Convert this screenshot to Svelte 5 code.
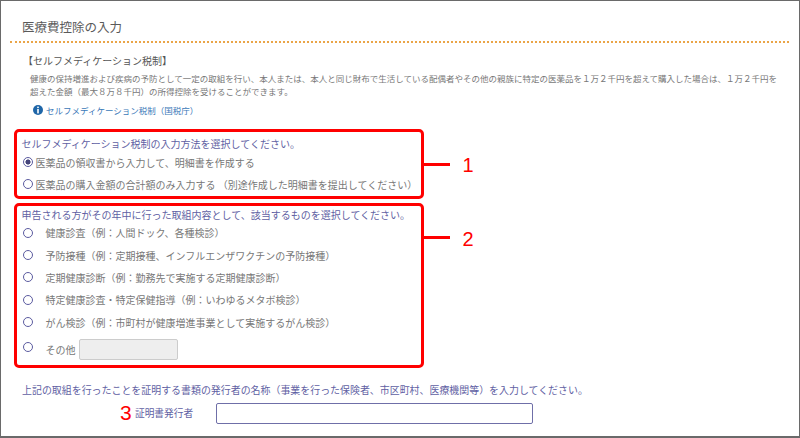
<script lang="ts">
  const kinds = [
    '健康診査（例：人間ドック、各種検診）',
    '予防接種（例：定期接種、インフルエンザワクチンの予防接種）',
    '定期健康診断（例：勤務先で実施する定期健康診断）',
    '特定健康診査・特定保健指導（例：いわゆるメタボ検診）',
    'がん検診（例：市町村が健康増進事業として実施するがん検診）'
  ];
  let method = $state('receipt');
  let kind = $state('');
</script>

<div class="frame">
  <h1>医療費控除の入力</h1>

  <section class="intro">
    <h2>【セルフメディケーション税制】</h2>
    <p>健康の保持増進および疾病の予防として一定の取組を行い、本人または、本人と同じ財布で生活している配偶者やその他の親族に特定の医薬品を１万２千円を超えて購入した場合は、１万２千円を超えた金額（最大８万８千円）の所得控除を受けることができます。</p>
    <a href="#top" class="link">
      <svg viewBox="0 0 10 10" width="10" height="10" aria-hidden="true">
        <circle cx="5" cy="5" r="5" fill="#1f66a8" />
        <rect x="4.2" y="1.6" width="1.6" height="1.5" fill="#fff" />
        <rect x="4.2" y="4" width="1.6" height="4.4" fill="#fff" />
      </svg>
      セルフメディケーション税制（国税庁）
    </a>
  </section>

  <section class="box method">
    <div class="prompt">セルフメディケーション税制の入力方法を選択してください。</div>
    <label class="opt tight">
      <input type="radio" bind:group={method} value="receipt" />
      <span>医薬品の領収書から入力して、明細書を作成する</span>
    </label>
    <label class="opt tight">
      <input type="radio" bind:group={method} value="total" />
      <span>医薬品の購入金額の合計額のみ入力する （別途作成した明細書を提出してください）</span>
    </label>
    <span class="tick"></span>
    <span class="num">1</span>
  </section>

  <section class="box kinds">
    <div class="prompt">申告される方がその年中に行った取組内容として、該当するものを選択してください。</div>
    {#each kinds as k (k)}
      <label class="opt">
        <input type="radio" bind:group={kind} value={k} />
        <span>{k}</span>
      </label>
    {/each}
    <label class="opt other">
      <input type="radio" bind:group={kind} value="other" />
      <span>その他</span>
      <input class="other-text" type="text" disabled />
    </label>
    <span class="tick"></span>
    <span class="num">2</span>
  </section>

  <section class="issuer">
    <div class="prompt long">上記の取組を行ったことを証明する書類の発行者の名称（事業を行った保険者、市区町村、医療機関等）を入力してください。</div>
    <div class="issuer-row">
      <span class="num-3">3</span>
      <label for="issuer">証明書発行者</label>
      <input id="issuer" type="text" />
    </div>
  </section>
</div>

<style>
  :global(body) { margin: 0; background: #fff; }
  .frame {
    box-sizing: border-box; width: 800px; height: 438px; overflow: hidden;
    border: 1px solid #6a6a6a; border-width: 1px 1px 2px 1.5px;
    font-family: "Noto Sans CJK JP", "Liberation Sans", sans-serif;
    color: #666; background: #fff;
  }
  h1 {
    margin: 0 10px 0 9px; padding: 19px 0 7px 12px;
    font-size: 12.5px; line-height: 14px; font-weight: 400; color: #5a5a5a;
    border-bottom: 2px dotted #eaa548;
  }
  .intro { padding: 11px 0 0 22px; height: 84px; box-sizing: border-box; }
  h2 { margin: 0; font-size: 10px; line-height: 14px; font-weight: 400; color: #555; }
  .intro p {
    margin: 4px 0 0 7px; width: 752px;
    font-size: 8.5px; line-height: 12.5px; color: #777;
  }
  .link {
    display: flex; align-items: center; gap: 3px; margin: 7px 0 0 10px;
    font-size: 8.5px; line-height: 12px; color: #3a78b8; text-decoration: none;
  }
  .box {
    position: relative; box-sizing: border-box; width: 410px; margin-left: 12.5px;
    border: 3px solid #f00; border-radius: 5px; padding: 4px 5px 0;
  }
  .method { height: 70px; margin-top: 2px; }
  .kinds { height: 165px; margin-top: 3.5px; padding-top: 1px; }
  .prompt { font-size: 10px; line-height: 15px; color: #5f5fa3; }
  .prompt.long { font-size: 9.95px; }
  .opt {
    display: flex; align-items: center; gap: 11px; height: 22.4px; padding-left: 1px;
    font-size: 10px; color: #777;
  }
  .opt.tight { gap: 1px; height: 22px; }
  input[type='radio'] {
    appearance: none; box-sizing: border-box; flex: none; margin: 0 2px 0 0;
    width: 10px; height: 10px; border: 1px solid #5b5ba0; border-radius: 50%; background: #fff;
  }
  input[type='radio']:checked { background: radial-gradient(circle, #44447a 0 2.3px, #fff 2.8px); }
  .other { height: 26px; gap: 0; margin-top: 3px; }
  .other input[type='radio'] { margin-bottom: 5px; }
  .other span { margin-left: 11px; }
  .other-text {
    box-sizing: border-box; width: 99px; height: 21px; margin-left: 3px;
    background: #eee; border: 1px solid #ccc; border-radius: 2px;
  }
  .tick { position: absolute; left: 406px; top: 30.5px; width: 27px; height: 3px; background: #f00; }
  .num {
    position: absolute; left: 446px; top: 21px; color: #f00;
    font: 400 20px/24px "Liberation Sans", sans-serif;
  }
  .issuer { padding: 14px 0 0 21px; }
  .issuer-row { display: flex; align-items: center; height: 22px; margin-top: 5.5px; padding-left: 98px; }
  .num-3 { width: 15px; color: #f00; font: 400 21px/22px "Liberation Sans", sans-serif; }
  .issuer-row label { width: 81px; font-size: 9.7px; color: #5f5fa3; }
  #issuer {
    box-sizing: border-box; width: 317px; height: 21px; margin: 0;
    border: 1px solid #6f6fa8; border-radius: 2px; background: #fff;
  }
</style>
